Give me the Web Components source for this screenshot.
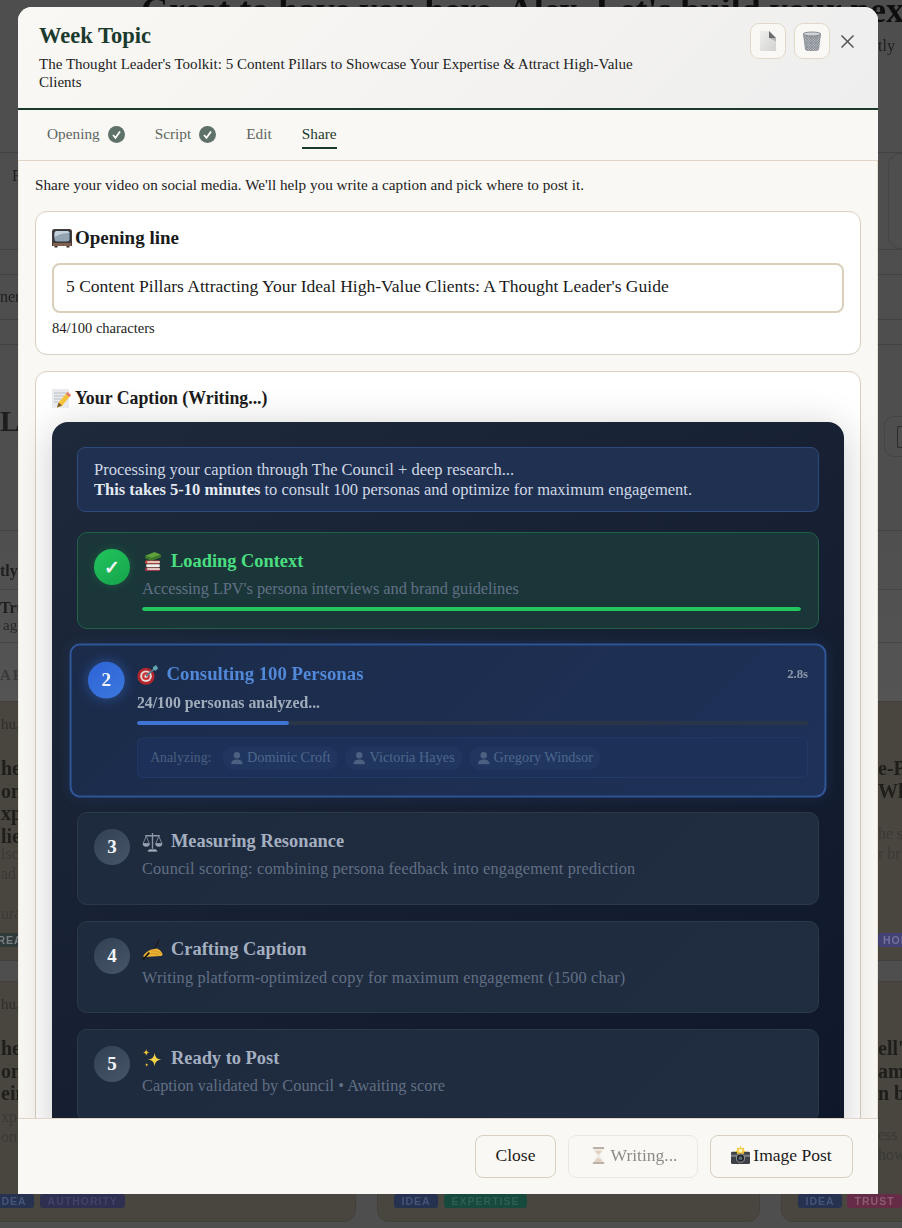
<!DOCTYPE html>
<html lang="en"><head><meta charset="utf-8"><title>Week Topic</title>
<style>
html,body{margin:0;height:100%;overflow:hidden;background:#4e4e4e;font-family:"Liberation Serif",serif;color:#1a1a1a}
</style></head>
<body>
<bg-page></bg-page>
<week-modal>
  <modal-head slot="head"></modal-head>
  <tab-bar slot="tabs"></tab-bar>
  <p class="lead" slot="lead">Share your video on social media. We'll help you write a caption and pick where to post it.</p>
  <share-card slot="cards" icon="tv" heading="Opening line" hs="19"><title-field></title-field></share-card>
  <share-card slot="cards" icon="memo" heading="Your Caption (Writing...)" hs="17.8" tight>
    <dark-panel>
      <notice-box slot="notice"></notice-box>
      <step-card state="done" num="✓" icon="books" ls="-.01">
        <span slot="title">Loading Context</span>
        <span slot="desc">Accessing LPV's persona interviews and brand guidelines</span>
        <progress-line value="100" color="#22c55e"></progress-line>
      </step-card>
      <step-card state="active" num="2" icon="target">
        <span slot="title">Consulting 100 Personas</span>
        <span slot="time">2.8s</span>
        <span slot="desc">24/100 personas analyzed...</span>
        <progress-line value="22.7" color="#3f74d4"></progress-line>
        <persona-row></persona-row>
      </step-card>
      <step-card state="pending" num="3" icon="scale" ls=".17">
        <span slot="title">Measuring Resonance</span>
        <span slot="desc">Council scoring: combining persona feedback into engagement prediction</span>
      </step-card>
      <step-card state="pending" num="4" icon="hand" ls=".175">
        <span slot="title">Crafting Caption</span>
        <span slot="desc">Writing platform-optimized copy for maximum engagement (1500 char)</span>
      </step-card>
      <step-card state="pending" num="5" icon="spark" ls=".03">
        <span slot="title">Ready to Post</span>
        <span slot="desc">Caption validated by Council • Awaiting score</span>
      </step-card>
    </dark-panel>
  </share-card>
  <foot-btn slot="foot" w="81">Close</foot-btn>
  <foot-btn slot="foot" w="130" disabled icon="hourglass">Writing...</foot-btn>
  <foot-btn slot="foot" w="143" icon="camera">Image Post</foot-btn>
</week-modal>
<script>
const ICONS={
tv:`<path d="M2.500 1h15A2.500 2.500 0 0 1 20 3.500V18H0V3.500A2.500 2.500 0 0 1 2.500 1z" fill="#4a3d39"/><rect x="1" y="2" width="18" height="12.500" rx="2.500" fill="#2f373f"/><rect x="2.500" y="3" width="15" height="10.500" rx="2.500" fill="#93a5b3"/><path d="M2.500 9.500c4-3.500 10-4.500 15-4.500V5.500c0-1.500-1-2.500-2.500-2.500H5C3.500 3 2.500 4 2.500 5.500z" fill="#c5d1da"/><rect x="1" y="15" width="18" height="3" fill="#80604f"/><rect x="2.500" y="18" width="3" height="1.500" fill="#3a2e2a"/><rect x="14.500" y="18" width="3" height="1.500" fill="#3a2e2a"/>`,
memo:`<rect x="0" y="1" width="17" height="19" fill="#e8eaed"/><path d="M2 5h13M2 8h10M2 11h7M2 14h4" stroke="#b7bcc4" stroke-width="1"/><path d="M15.500 4l3.500 3-9 11-5 1.500 1.500-5z" fill="#f3c23a"/><path d="M15.500 4l3.500 3-1.600 2-3.500-3z" fill="#e57a7a"/><path d="M5 19.500l1.500-5 3.500 3z" fill="#7a5c30"/>`,
books:`<path d="M3 4.500L12 1l6 2.500-9 3.500z" fill="#5fa13a"/><path d="M3 4.500l6 2.500 9-3.500v2.500l-9 3.500-6-2.500z" fill="#3f7a2b"/><rect x="3" y="9" width="14" height="3.200" rx="1" fill="#c9473d"/><rect x="5" y="9.800" width="12" height="1.400" fill="#f2efe6"/><rect x="4" y="12.600" width="13" height="2.800" rx="1" fill="#f3f0ea"/><rect x="3" y="15.600" width="14" height="3.400" rx="1" fill="#a53a4d"/><rect x="5" y="16.400" width="12" height="1.500" fill="#efe9e2"/>`,
target:`<circle cx="8.500" cy="11.500" r="8" fill="#b3262d"/><circle cx="8.500" cy="11.500" r="5.400" fill="#e9d9d5"/><circle cx="8.500" cy="11.500" r="3.600" fill="#c7353a"/><circle cx="8.500" cy="11.500" r="1.500" fill="#eadcd6"/><path d="M8.500 11.500L17 4" stroke="#4a7f8a" stroke-width="1.600"/><path d="M15 3l3-2 1 2 1 1-2.500 2.500-2.500-1z" fill="#5ea3ad"/>`,
scale:`<path d="M10 2v15M3 4.500h14M5.500 19h9" stroke="#8d97a6" stroke-width="1.300" fill="none"/><path d="M4 5L1 12h6zM16 5l-3 7h6z" fill="none" stroke="#7f8999" stroke-width=".9"/><path d="M.6 12h6.800a3.400 3 0 0 1-6.800 0zM12.600 12h6.800a3.400 3 0 0 1-6.800 0z" fill="#98a2b0"/><rect x="6.500" y="17.500" width="7" height="1.500" fill="#a9b2bf"/>`,
hand:`<path d="M12 9L16.500.5" stroke="#1b1813" stroke-width="1"/><path d="M1 16.500C3 13 6 11 9 10l5-1c2 .5 4.500 2.500 5.500 5 .3 1.200-.5 2-1.500 2.200L6 17c-2 .5-3.800.5-5-.5z" fill="#eeb436"/><path d="M9 11.500c3-.5 6 0 9 2.500M8 14c3-.5 6 0 8.500 1.500" stroke="#c98f22" stroke-width=".8" fill="none"/><path d="M7 13L1 19.500" stroke="#15120e" stroke-width="1.500"/>`,
spark:`<path d="M12 4.500c.7 4.500 2 6 6.500 6.500-4.500.7-5.800 2-6.500 6.500-.7-4.500-2-5.800-6.500-6.500C10 10.500 11.300 9 12 4.500z" fill="#f6d349"/><path d="M4 1c.3 2.200 1 2.900 3 3.200-2 .3-2.700 1-3 3.200-.3-2.200-1-2.900-3-3.200C3 3.900 3.700 3.200 4 1z" fill="#f4c63a"/><path d="M4.500 14c.2 1.400.6 1.800 2 2-1.400.2-1.800.6-2 2-.2-1.400-.6-1.800-2-2 1.400-.2 1.800-.6 2-2z" fill="#f4c63a"/>`,
hourglass:`<rect x="4" y="1" width="12" height="2.200" rx=".8" fill="#7a6a5a"/><rect x="4" y="16.800" width="12" height="2.200" rx=".8" fill="#7a6a5a"/><path d="M5 3.200h10c0 4-3.500 5-3.500 6.800S15 12.800 15 16.800H5c0-4 3.500-5 3.500-6.800S5 7.200 5 3.200z" fill="#e6e1da"/><path d="M6.500 5h7c-.5 2-3.500 3-3.500 5-0-2-3-3-3.500-5zM6 16.500c.5-2 3-3.500 4-4 1 .5 3.500 2 4 4z" fill="#c6a883"/>`,
camera:`<rect x="0" y="6" width="20" height="13" rx="1.500" fill="#3d4044"/><rect x="0" y="9" width="20" height="2.500" fill="#76797d"/><circle cx="10" cy="12.800" r="4.300" fill="#22262a" stroke="#9a9da0"/><circle cx="10" cy="12.800" r="2" fill="#5a6670"/><path d="M10 0l1.300 2.700L14 1.500l-.8 2.900 2.800 1-2.600 1.500.600 1.600L10 8l-4 .500.600-1.600L4 5.400l2.800-1L6 1.500l2.700 1.200z" fill="#f4c53a"/><circle cx="10" cy="4.800" r="2" fill="#fdf2c0"/>`,
page:`<defs><linearGradient id="pg" x1="0" y1="0" x2="1" y2="1"><stop offset="0" stop-color="#efefed"/><stop offset="1" stop-color="#d2d2d0"/></linearGradient></defs><path d="M2 0h9.500L18 7v13H2z" fill="url(#pg)"/><path d="M11 0l7 7h-7z" fill="#6a6c6e"/><path d="M11 7h7v3.500z" fill="#b5b5b3"/>`,
trash:`<defs><pattern id="m" width="1.800" height="1.800" patternUnits="userSpaceOnUse" patternTransform="rotate(45)"><rect width="1.800" height="1.800" fill="#d2d6da"/><path d="M0 .4h1.800M.4 0v1.800" stroke="#757c84" stroke-width=".7"/></pattern></defs><path d="M1.500 3.500l2 15.300c2.500 1.500 10.500 1.500 13 0l2-15.300c-3.500 1.500-13.500 1.500-17 0z" fill="url(#m)" stroke="#7e848b" stroke-width=".7"/><ellipse cx="10" cy="3" rx="8.800" ry="2" fill="#cfd3d7" stroke="#6e747b" stroke-width=".8"/>`,
bust:`<circle cx="10" cy="6.500" r="4.500" fill="currentColor"/><path d="M2 19c0-5 4-6.500 8-6.500s8 1.500 8 6.500z" fill="currentColor"/>`
};
function def(name,css,html,init){
  customElements.define(name,class extends HTMLElement{
    connectedCallback(){
      if(this.shadowRoot)return;
      const r=this.attachShadow({mode:"open"});
      const h=typeof html==="function"?html(this):html;
      r.innerHTML=`<style>${css}</style>${h}`;
      init&&init(this,r);
    }
  });
}
def("e-moji",":host{display:inline-flex;flex:none}svg{display:block}",
  e=>{const s=e.getAttribute("s")||20;return `<svg width="${s}" height="${s}" viewBox="0 0 20 20" aria-hidden="true">${ICONS[e.getAttribute("n")]}</svg>`});

/* ---------- page behind the modal ---------- */
def("bg-page",`
:host{display:block;position:fixed;inset:0;overflow:hidden;background:#4e4e4e;color:#1e1e1e}
.wrap{filter:blur(.5px);width:902px}
.hero{height:153px;border-bottom:1px solid #424242;box-sizing:border-box}
h1{margin:0;font-size:36px;font-weight:700;line-height:20px;padding:0 0 0 141px;white-space:nowrap;height:16px;color:#0e0e0e}
.band{display:grid;grid-template-columns:450px 452px;box-sizing:border-box;border-bottom:1px solid #424242}
.tly{padding:21px 0 0 878px;font-size:16px;line-height:18px}
.b1{height:97px}.b1 .l{padding:14px 0 0 12px;font-size:16px}
.box{border:1px solid #444;border-radius:12px;height:96px;width:60px;margin-left:438px;box-sizing:border-box}
.b2{height:45px}.b2 .l{padding:13px 0 0 0;font-size:16px;white-space:nowrap}
.gap{height:25px}
.b3{height:186px}.b3 .l{padding:59px 0 0 0;font-size:30px;font-weight:700;letter-spacing:1px}
.box2{border:1px solid #454545;border-radius:10px;height:41px;width:60px;margin:71px 0 0 434px;display:flex;align-items:center;padding-left:12px;box-sizing:border-box}
.box2 i{width:8px;height:20px;border:1.500px solid #2c2c2c;border-right:0;border-radius:2px}
.b4{height:170px;display:block;background:linear-gradient(#4f4f4f,#545454);border-bottom:0;font-size:16px}
.b4 div{border-bottom:1px solid #454545}
.s1{height:59px;box-sizing:border-box;padding-top:31px;font-weight:700;line-height:18px}
.s2{height:53px;box-sizing:border-box;padding-top:9px;line-height:17px}
.s2 b{display:block}.s2 span{padding-left:3px;font-size:15px;color:#282828}
.ar{border:0!important;padding-top:24px;color:#3a3a3a;font-weight:700;letter-spacing:2px;font-size:15px}
.grid{display:grid;grid-template-columns:repeat(3,383px);column-gap:21px;row-gap:20px;margin-left:-27px;width:1170px}
.card{background:#494640;border:1px solid #43403b;border-radius:0 0 12px 12px;box-sizing:border-box;display:flex;flex-direction:column;padding:13px 16px 13px 27px;height:260px}
.c2{height:241px}
.card.m{padding-left:96px}
.d{font-size:15px;color:#2e2c28;height:42px;line-height:18px}
.t{font-size:20px;font-weight:700;line-height:22.500px;color:#1f1e1b}
.s{font-size:16px;color:#3b3933;line-height:20px}
.tags{margin-top:auto;display:flex;gap:6px;margin-left:-11px}
.m .tags{margin-left:-80px;gap:5px}
.tag{font:700 10.500px "Liberation Sans",sans-serif;letter-spacing:1px;padding:0 7.500px;height:14px;line-height:14px;border-radius:3px;white-space:nowrap}
.idea{background:#26324f;color:#45547a}.auth{background:#2f2f50;color:#43436a}.exp{background:#174a3d;color:#2f5f51}.tru{background:#662b47;color:#8b5c72}.rea{background:#303a3a;color:#778080}.hor{background:#424275;color:#72729a}
`,`
<div class="wrap">
<div class="hero"><h1>Great to have you here, Alex. Let's build your next</h1><div class="tly">tly</div></div>
<div class="band b1"><div class="l">R</div><div><div class="box"></div></div></div>
<div class="band gap"></div>
<div class="band b2"><div class="l">ner</div></div>
<div class="band gap"></div>
<div class="band b3"><div class="l">LL</div><div><div class="box2"><i></i></div></div></div>
<div class="band b4"><div class="s1">tly</div><div class="s2"><b>Tru</b><span>ago</span></div><div class="ar">AR</div></div>
<div class="grid">
 <div class="card"><div class="d">hu,</div><div class="t">he<br>on<br>xp<br>lie</div><div class="s" style="margin-top:-3px">isc<br>ad<br><br>ura</div><div class="tags"><span class="tag rea">REA</span></div></div>
 <div class="card"></div>
 <div class="card m"><div class="d"></div><div class="t">e-P<br>Why</div><div class="s" style="margin-top:22px">he s<br>r br</div><div class="tags" style="margin-left:0"><span class="tag hor" style="padding-left:5px">HOR</span></div></div>
 <div class="card c2"><div class="d">hu,</div><div class="t">he<br>on<br>ein</div><div class="s" style="margin-top:2px">xp<br>ons</div><div class="tags"><span class="tag idea">IDEA</span><span class="tag auth">AUTHORITY</span></div></div>
 <div class="card c2"><div class="tags"><span class="tag idea">IDEA</span><span class="tag exp">EXPERTISE</span></div></div>
 <div class="card c2 m"><div class="d"></div><div class="t">ell':<br>am<br>n b</div><div class="s" style="margin-top:20px">ess<br>how</div><div class="tags"><span class="tag idea">IDEA</span><span class="tag tru">TRUST</span></div></div>
</div>
</div>`);

/* ---------- modal ---------- */
def("week-modal",`
:host{position:fixed;left:18px;top:7px;width:860px;height:1187px;display:flex;flex-direction:column;background:#faf8f4;border-radius:14px 14px 0 0;overflow:hidden}
.scroll{flex:1;min-height:0;overflow:hidden;padding:15px 17px 0;display:flex;flex-direction:column;box-shadow:inset -1px 0 0 #e6dfd2,inset 1px 0 0 #efe9dd}
.foot{flex:none;height:76px;box-sizing:border-box;border-top:1px solid #e0d5c7;background:#faf8f4;display:flex;justify-content:flex-end;align-items:flex-start;gap:12px;padding:16px 25px 0 0;position:relative;z-index:1}
::slotted(.lead){margin:0 0 17px;font-size:15.200px;line-height:18px;color:#222;white-space:nowrap}
.cards{display:flex;flex-direction:column;gap:16px}
`,`
<slot name="head"></slot><slot name="tabs"></slot>
<div class="scroll"><slot name="lead"></slot><div class="cards"><slot name="cards"></slot></div></div>
<div class="foot"><slot name="foot"></slot></div>`);

def("modal-head",`
:host{display:flex;flex:none;height:103px;box-sizing:border-box;border-bottom:2px solid #1a3a2e;padding:15px 24px 0 21px;background:linear-gradient(135deg,#faf8f4,#eeeeee);justify-content:space-between;align-items:flex-start}
h2{margin:0;font-size:22.500px;line-height:27px;font-weight:700;color:#1a3a2e}
p{margin:6px 0 0;font-size:15.050px;line-height:18px;color:#222;width:610px}
.acts{display:flex;gap:8px;align-items:center;padding-top:1px}
button{all:unset;width:34px;height:34px;border:1px solid #e3d8c8;border-radius:9px;background:#faf8f4;display:flex;align-items:center;justify-content:center}
svg.x{margin:0 0 0 3px;display:block}
`,`
<div><h2>Week Topic</h2><p>The Thought Leader's Toolkit: 5 Content Pillars to Showcase Your Expertise &amp; Attract High-Value Clients</p></div>
<div class="acts"><button aria-label="Copy"><e-moji n="page" s="20"></e-moji></button><button aria-label="Delete"><e-moji n="trash" s="20"></e-moji></button>
<svg class="x" width="13" height="13" viewBox="0 0 13 13"><path d="M.5.5l12 12M12.500.5l-12 12" stroke="#555" stroke-width="1.500" fill="none"/></svg></div>`);

def("tab-bar",`
:host{display:flex;flex:none;height:51px;box-sizing:border-box;border-bottom:1px solid #e0d5c7;padding:0 0 0 29px;gap:30px;font-size:15.300px;color:#5d6561}
.t{display:flex;align-items:center;gap:8px;height:39px;padding-top:11px;box-sizing:border-box;border-bottom:2px solid transparent}
.t.a{color:#1a3a2e;border-bottom-color:#1a3a2e}
.t svg{display:block}
`,(()=>{const c=`<svg width="17" height="17" viewBox="0 0 17 17"><circle cx="8.500" cy="8.500" r="8.500" fill="#5f7269"/><path d="M5 9l2.500 2.800L12 5.500" stroke="#fff" stroke-width="1.800" fill="none"/></svg>`;
return `<div class="t">Opening ${c}</div><div class="t">Script ${c}</div><div class="t">Edit</div><div class="t a">Share</div>`})());

def("share-card",`
:host{display:block;background:#fff;border:1px solid #d9cfc0;border-radius:12px;padding:16px 16px 18px;flex:none;box-sizing:border-box}
:host([tight]){padding-bottom:0}
.h{display:flex;align-items:center;gap:3px;font-weight:700;line-height:20px;color:#1a1a1a;margin-bottom:15px}
:host([tight]) .h{margin-bottom:14px}
`,e=>`<div class="h" style="font-size:${e.getAttribute("hs")}px"><e-moji n="${e.getAttribute("icon")}" s="20"></e-moji><span>${e.getAttribute("heading")}</span></div><slot></slot>`);

def("title-field",`
:host{display:block}
input{all:unset;display:block;width:100%;box-sizing:border-box;height:50px;border:2px solid #d9cfbb;border-radius:8px;padding:0 12px 3px;font:17.550px "Liberation Serif",serif;color:#1a1a1a;background:#fff}
p{margin:7px 0 0;font-size:14.500px;line-height:16px;color:#222}
`,`<input aria-label="Opening line" value="5 Content Pillars Attracting Your Ideal High-Value Clients: A Thought Leader's Guide"><p>84/100 characters</p>`);

def("dark-panel",`
:host{display:flex;flex-direction:column;gap:16px;background:linear-gradient(145deg,#1e293b,#0f172a);border-radius:16px 16px 0 0;padding:25px 25px 24px;box-shadow:0 6px 40px rgba(0,0,0,.2)}
`,`<slot name="notice"></slot><div style="display:contents"><slot></slot></div>`);

def("notice-box",`
:host{display:block;background:#1f3050;border:1px solid #2c4a7a;border-radius:8px;padding:11.500px 16px 11.500px;font-size:16.500px;line-height:20px;color:#cfd8e5;margin-bottom:4px;white-space:nowrap}
b{color:#e4eaf2}
`,`Processing your caption through The Council + deep research...<br><b>This takes 5-10 minutes</b> to consult 100 personas and optimize for maximum engagement.`);

def("step-card",`
:host{display:flex;gap:12px;box-sizing:border-box;border:1px solid #2b394d;border-radius:10px;padding:16px 17px 23.500px 16px;background:linear-gradient(135deg,#1e2a3d,#202c40);flex:none}
:host([state=done]){background:#1b3639;border-color:#226048;padding-bottom:17px}
:host([state=active]){background:linear-gradient(135deg,#1b2b49,#1e3158);border:2px solid #2f5699;padding:16px 16px 17px 16px;transform:scale(1.02);box-shadow:0 0 14px rgba(59,110,220,.14)}
.n{flex:none;width:36px;height:36px;border-radius:50%;display:flex;align-items:center;justify-content:center;font-size:19px;font-weight:700;color:#f2f5f9;background:linear-gradient(145deg,#334155,#475569)}
:host([state=done]) .n{background:linear-gradient(145deg,#22c55e,#16a34a);box-shadow:0 0 10px rgba(34,197,94,.25)}
:host([state=active]) .n{background:linear-gradient(145deg,#2e63d8,#3b78dc);box-shadow:0 0 14px rgba(59,130,246,.45)}
.b{flex:1;min-width:0;display:flex;flex-direction:column}
.h{display:flex;align-items:center;gap:8px;height:24px}
.t{font-size:18.400px;font-weight:700;color:#a4afc0;white-space:nowrap;flex:1}
:host([state=done]) .t{color:#4ade80}
:host([state=active]) .t{color:#5288d8}
.m{font-size:12.500px;font-weight:700;color:#8c98ab}
.d{font-size:16.300px;line-height:22px;margin-top:5px;color:#617085;white-space:nowrap}
:host([state=active]) .d{font-weight:700;color:#a2adbc;font-size:15.500px}
`,e=>`<div class="n">${e.getAttribute("num")}</div><div class="b"><div class="h"><e-moji n="${e.getAttribute("icon")}" s="21"></e-moji><span class="t"><slot name="title"></slot></span><span class="m"><slot name="time"></slot></span></div><div class="d" style="letter-spacing:${e.getAttribute("ls")||0}px"><slot name="desc"></slot></div><slot></slot></div>`);

def("progress-line",`
:host{display:block;height:4px;background:#2a3648;border-radius:2px;margin-top:7px;overflow:hidden}
i{display:block;height:100%;border-radius:2px}
`,e=>`<i style="width:${e.getAttribute("value")}%;background:${e.getAttribute("color")}"></i>`);

def("persona-row",`
:host{display:flex;align-items:center;height:40px;box-sizing:border-box;margin-top:12px;background:#1d3158;border:1px solid #233a66;border-radius:6px;padding:0 12px;gap:7px;font-size:13.500px;color:#4a5f80;white-space:nowrap}
.l{margin-right:4px}
.c{display:flex;align-items:center;gap:3px;height:23px;padding:0 7px;border-radius:12px;background:#20365f;color:#4e668c;font-size:14px}
e-moji{color:#4b6182}
`,`<span class="l">Analyzing:</span><span class="c"><e-moji n="bust" s="14"></e-moji>Dominic Croft</span><span class="c"><e-moji n="bust" s="14"></e-moji>Victoria Hayes</span><span class="c"><e-moji n="bust" s="14"></e-moji>Gregory Windsor</span>`);

def("foot-btn",`
:host{display:inline-flex;align-items:center;justify-content:center;gap:3px;height:43px;box-sizing:border-box;border:1px solid #d8cfc0;border-radius:8px;background:#faf8f4;font-size:17.500px;color:#1a1a1a;white-space:nowrap;flex:none;padding-bottom:2px}
:host([disabled]){opacity:.5;border-color:#e0d8ca}
`,e=>{e.style.width=e.getAttribute("w")+"px";const i=e.getAttribute("icon");return `${i?`<e-moji n="${i}" s="19"></e-moji>`:""}<slot></slot>`});
</script>
</body></html>
